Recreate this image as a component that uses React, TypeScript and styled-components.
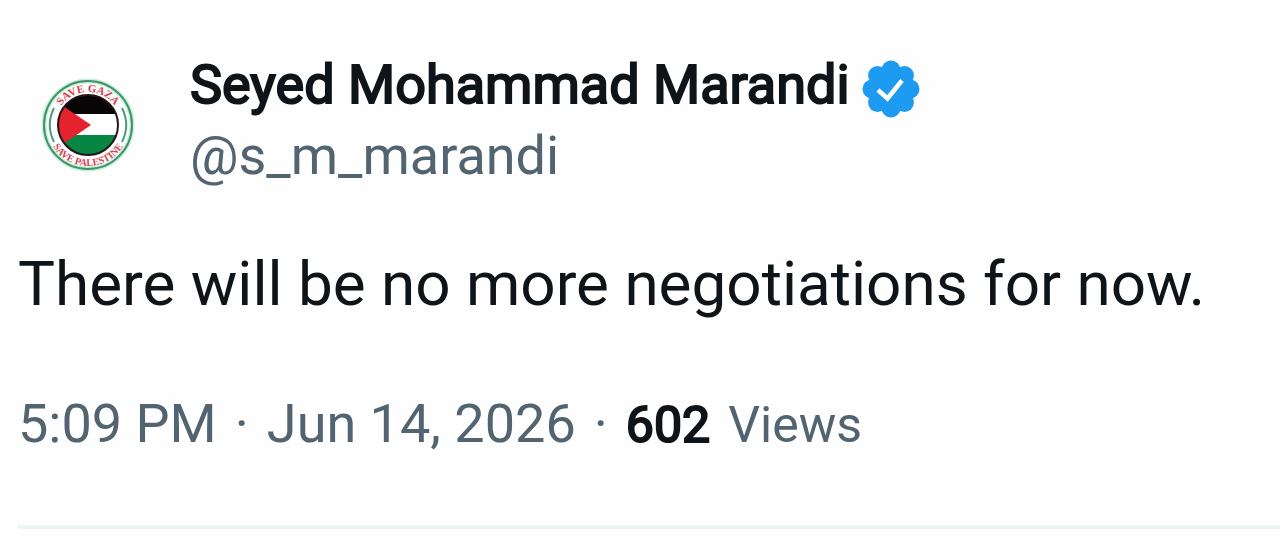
import React from "react";
import styled, { createGlobalStyle } from "styled-components";

const ink = "#0f1419";
const muted = "#536471";

const GlobalStyle = createGlobalStyle`
  *, *::before, *::after { box-sizing: border-box; }
  body {
    margin: 0;
    background: #fefefe;
    font-family: Roboto, "Liberation Sans", sans-serif;
  }
`;

const Post = styled.article`
  padding: 48px 0 16px 18px;
`;

const Header = styled.header`
  display: flex;
  align-items: flex-start;
  gap: 34px;
`;

const Avatar = styled.svg`
  display: block;
  flex: none;
  width: 138px;
  height: 152px;
`;

const Names = styled.div`
  display: flex;
  flex-direction: column;
  min-width: 0;
`;

const NameRow = styled.div`
  display: flex;
  align-items: center;
  gap: 12px;
  height: 74px;
`;

const Name = styled.h1`
  margin: 0;
  font-size: 54px;
  line-height: 72px;
  font-weight: 400;
  -webkit-text-stroke: 2px ${ink};
  color: ${ink};
`;

const Badge = styled.svg`
  display: block;
  flex: none;
  width: 58px;
  height: 58px;
  margin-top: 8px;
`;

const Handle = styled.span`
  font-size: 54px;
  line-height: 68px;
  color: ${muted};
`;

const Message = styled.p`
  margin: 48px 0 0;
  font-size: 62px;
  line-height: 72px;
  color: ${ink};
`;

const Meta = styled.footer`
  display: flex;
  align-items: baseline;
  gap: 18px;
  margin-top: 68px;
  padding-bottom: 64px;
  font-size: 54px;
  line-height: 72px;
  color: ${muted};
`;

const When = styled.time`
  display: flex;
  gap: 18px;
`;

const Count = styled.strong`
  font-size: 50px;
  font-weight: 400;
  -webkit-text-stroke: 2px ${ink};
  color: ${ink};
`;

const Views = styled.span`
  font-size: 50px;
`;

const Divider = styled.hr`
  margin: 0;
  border: 0;
  height: 4px;
  background: #ecf5f4;
`;

const lobes = Array.from({ length: 8 }, (_, i) => {
  const a = (i * Math.PI) / 4;
  return { x: 29 + 19 * Math.cos(a), y: 29 + 19 * Math.sin(a) };
});

export default function App() {
  return (
    <>
      <GlobalStyle />
      <Post>
        <Header>
          <Avatar viewBox="0 0 138 152" role="img" aria-label="Save Gaza, Save Palestine">
            <defs>
              <clipPath id="flag"><circle cx="70" cy="77" r="30" /></clipPath>
              <path id="top" d="M37 77 A33 33 0 0 1 103 77" />
              <path id="bottom" d="M29 77 A41 41 0 0 0 111 77" />
            </defs>
            <circle cx="70" cy="77" r="44" fill="#fff" stroke="#c9f2dc" strokeWidth="5" />
            <circle cx="70" cy="77" r="44" fill="none" stroke="#43906a" strokeWidth="2" />
            <path d="M36 60 A38 38 0 0 0 36 94 M104 60 A38 38 0 0 1 104 94" fill="none" stroke="#4b9c76" strokeWidth="2" />
            <g clipPath="url(#flag)">
              <rect x="40" y="47" width="60" height="20" fill="#080506" />
              <rect x="40" y="66" width="60" height="22" fill="#fff" />
              <rect x="40" y="87" width="60" height="21" fill="#078543" />
              <path d="M32 49 L73 77 L32 105 Z" fill="#e5232e" />
            </g>
            <circle cx="70" cy="77" r="30" fill="none" stroke="#27131a" strokeWidth="2" />
            <g fill="#d83f50" fontFamily="Liberation Serif, serif" fontWeight="700" textAnchor="middle">
              <text fontSize="11"><textPath href="#top" startOffset="50%">SAVE GAZA</textPath></text>
              <text fontSize="10"><textPath href="#bottom" startOffset="50%">SAVE PALESTINE</textPath></text>
            </g>
          </Avatar>
          <Names>
            <NameRow>
              <Name>Seyed Mohammad Marandi</Name>
              <Badge viewBox="0 0 58 58" role="img" aria-label="Verified account">
                <g fill="#1d9bf0">
                  <circle cx="29" cy="29" r="21" />
                  {lobes.map((p, i) => <circle key={i} cx={p.x} cy={p.y} r="9.500" />)}
                </g>
                <path d="M16 30 L25.500 38.500 L40 20.500" fill="none" stroke="#fff" strokeWidth="4.500" />
              </Badge>
            </NameRow>
            <Handle>@s_m_marandi</Handle>
          </Names>
        </Header>
        <Message>There will be no more negotiations for now.</Message>
        <Meta>
          <When dateTime="2026-06-14T17:09">
            <span>5:09 PM</span>
            <span>·</span>
            <span>Jun 14, 2026</span>
          </When>
          <span>·</span>
          <Count>602</Count>
          <Views>Views</Views>
        </Meta>
        <Divider />
      </Post>
    </>
  );
}
